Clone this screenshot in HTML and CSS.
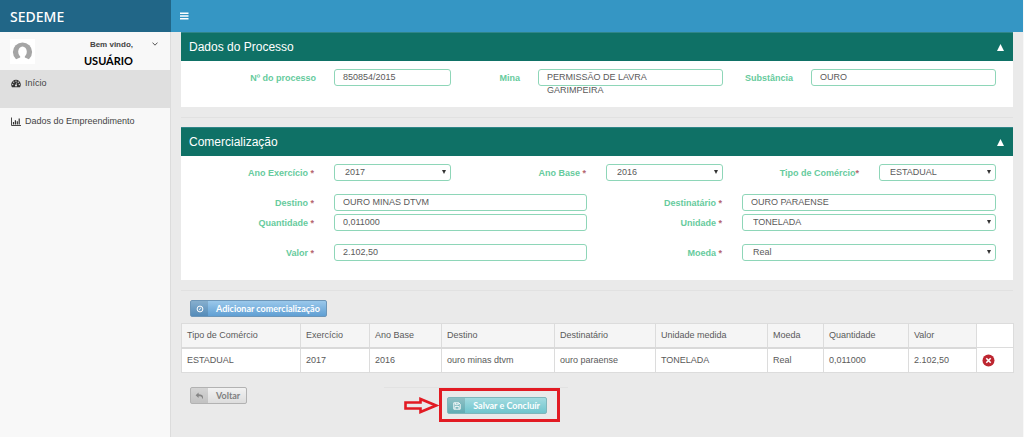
FILE: index.html
```html
<!DOCTYPE html>
<html lang="pt-BR">
<head>
<meta charset="utf-8">
<meta name="viewport" content="width=device-width, initial-scale=1">
<title>SEDEME</title>
<link rel="stylesheet" href="styles.css">
</head>
<body>
<div class="app">
  <aside class="sidebar">
    <div class="brand">SEDEME</div>
    <div class="user">
      <svg class="avatar" viewBox="0 0 25 25" aria-hidden="true">
        <rect width="25" height="25" fill="#fff"/>
        <circle cx="12.500" cy="13" r="9.600" fill="#a5a5a5"/>
        <path d="M5 23c.3-2.600 2.600-3.400 5.200-4.400v-3h4.600v3c2.600 1 4.900 1.800 5.200 4.400z" fill="#fff"/>
        <ellipse cx="12.500" cy="12.700" rx="4.300" ry="5.300" fill="#fff"/>
      </svg>
      <div class="user-text">
        <span class="welcome">Bem vindo,</span>
        <strong class="user-name">USUÁRIO</strong>
      </div>
      <button class="user-toggle" type="button" aria-label="Opções do usuário">
        <svg viewBox="0 0 6 4" width="6" height="4"><path d="M.5.6 3 3.200 5.500.6" fill="none" stroke="#555" stroke-width="1"/></svg>
      </button>
    </div>
    <nav class="menu">
      <a class="menu-item active" href="#">
        <svg viewBox="0 0 10 9" width="10" height="9"><path d="M5 .8A4.800 4.800 0 0 0 .2 5.600c0 1 .3 1.900.8 2.600h8c.5-.7.8-1.600.8-2.600A4.800 4.800 0 0 0 5 .8z" fill="#333"/><g fill="#dfdfdf"><circle cx="1.700" cy="5.500" r=".65"/><circle cx="2.700" cy="3.200" r=".65"/><circle cx="5" cy="2.200" r=".65"/><circle cx="7.300" cy="3.200" r=".65"/><circle cx="8.300" cy="5.500" r=".65"/><circle cx="5" cy="6.600" r="1"/></g><path d="m5 6.600.6-3" stroke="#dfdfdf" stroke-width=".6"/></svg>
        Início
      </a>
      <a class="menu-item" href="#">
        <svg viewBox="0 0 10 9" width="10" height="9"><path d="M.5.500v8H10" fill="none" stroke="#333" stroke-width=".9"/><path d="M2.500 5v2.600M4.400 3.200v4.400M6.300 4.200v3.400M8.200 1.500v6.100" stroke="#333" stroke-width="1.200"/></svg>
        Dados do Empreendimento
      </a>
    </nav>
  </aside>

  <div class="page">
    <header class="topbar">
      <button class="hamburger" type="button" aria-label="Menu"><svg viewBox="0 0 9 8" width="9" height="8"><path d="M0 1.200h8.500M0 4h8.500M0 6.800h8.500" stroke="#fff" stroke-width="1.500"/></svg></button>
    </header>
    <main class="content">
      <section class="panel">
        <h2 class="panel-title">Dados do Processo
          <button class="collapse" type="button" aria-label="Recolher"><svg viewBox="0 0 7 7" width="7" height="7"><path d="M3.500 0 7 7H0z" fill="#fff"/></svg></button>
        </h2>
        <div class="panel-body">
          <div class="row process">
            <label for="proc">Nº do processo</label><output class="field" id="proc">850854/2015</output>
            <label for="mina">Mina</label><output class="field" id="mina">PERMISSÃO DE LAVRA<br>GARIMPEIRA</output>
            <label for="subst">Substância</label><output class="field" id="subst">OURO</output>
          </div>
        </div>
      </section>
      <hr>
      <section class="panel">
        <h2 class="panel-title">Comercialização
          <button class="collapse" type="button" aria-label="Recolher"><svg viewBox="0 0 7 7" width="7" height="7"><path d="M3.500 0 7 7H0z" fill="#fff"/></svg></button>
        </h2>
        <form class="panel-body trade" id="trade">
          <div class="row triple spaced">
            <label for="exercicio">Ano Exercício <i>*</i></label>
            <div class="select"><select class="field" id="exercicio"><option>2017</option></select></div>
            <label for="base">Ano Base <i>*</i></label>
            <div class="select"><select class="field" id="base"><option>2016</option></select></div>
            <label for="tipo">Tipo de Comércio<i>*</i></label>
            <div class="select"><select class="field" id="tipo"><option>ESTADUAL</option></select></div>
          </div>
          <div class="row double">
            <label for="destino">Destino <i>*</i></label>
            <input class="field" id="destino" type="text" value="OURO MINAS DTVM">
            <label for="destinatario">Destinatário <i>*</i></label>
            <input class="field" id="destinatario" type="text" value="OURO PARAENSE">
          </div>
          <div class="row double spaced">
            <label for="quantidade">Quantidade <i>*</i></label>
            <input class="field" id="quantidade" type="text" value="0,011000">
            <label for="unidade">Unidade <i>*</i></label>
            <div class="select"><select class="field" id="unidade"><option>TONELADA</option></select></div>
          </div>
          <div class="row double">
            <label for="valor">Valor <i>*</i></label>
            <input class="field" id="valor" type="text" value="2.102,50">
            <label for="moeda">Moeda <i>*</i></label>
            <div class="select"><select class="field" id="moeda"><option>Real</option></select></div>
          </div>
        </form>
      </section>
      <hr>
      <div class="toolbar">
        <button class="btn blue" type="button">
          <span class="btn-icon"><svg viewBox="0 0 8 8" width="8" height="8"><circle cx="4" cy="4" r="2.900" fill="none" stroke="#fff" stroke-width="1"/><path d="M4.900 2.600 3.200 5.200" stroke="#fff" stroke-width=".9"/></svg></span>
          <span class="btn-label">Adicionar comercialização</span>
        </button>
      </div>
      <table class="items">
        <colgroup><col class="c-tipo"><col class="c-exercicio"><col class="c-base"><col class="c-destino"><col class="c-destinatario"><col class="c-unidade"><col class="c-moeda"><col class="c-quantidade"><col class="c-valor"><col class="c-acao"></colgroup>
        <thead>
          <tr><th>Tipo de Comércio</th><th>Exercício</th><th>Ano Base</th><th>Destino</th><th>Destinatário</th><th>Unidade medida</th><th>Moeda</th><th>Quantidade</th><th>Valor</th><td></td></tr>
        </thead>
        <tbody>
          <tr><td>ESTADUAL</td><td>2017</td><td>2016</td><td>ouro minas dtvm</td><td>ouro paraense</td><td>TONELADA</td><td>Real</td><td>0,011000</td><td>2.102,50</td>
            <td><button class="remove" type="button" aria-label="Remover"><svg viewBox="0 0 13 13" width="13" height="13"><circle cx="6.500" cy="6.500" r="6" fill="#bd2630"/><path d="m4.300 4.300 4.400 4.400M8.700 4.300 4.300 8.700" stroke="#fff" stroke-width="1.600"/></svg></button></td></tr>
        </tbody>
      </table>
      <div class="actions">
        <button class="btn gray" type="button">
          <span class="btn-icon"><svg viewBox="0 0 9 8" width="9" height="8"><path d="M3.600.6.600 3.300l3 2.700V4.300c2.400 0 3.700.4 3.900 2.900 1.600-3.200-.4-4.900-3.900-4.900z" fill="#858585"/></svg></span>
          <span class="btn-label">Voltar</span>
        </button>
        <div class="save-area">
          <svg class="arrow" viewBox="0 0 35 17" width="35" height="17" aria-hidden="true"><path d="M1.500 5.500h15V2L32 8.500 16.500 15v-3.500h-15z" fill="none" stroke="#e21b23" stroke-width="2.600"/></svg>
          <div class="highlight">
            <button class="btn teal" type="submit" form="trade">
              <span class="btn-icon"><svg viewBox="0 0 8 8" width="8" height="8"><path d="M.8.800h5l1.400 1.400v5H.8zM2.300.800v2h2.900v-2M2 7.200V4.600h4v2.600" fill="none" stroke="#fff" stroke-width=".9"/></svg></span>
              <span class="btn-label">Salvar e Concluír</span>
            </button>
          </div>
        </div>
      </div>
    </main>
  </div>
</div>
</body>
</html>
```
FILE: styles.css
```css
* { box-sizing: border-box; }
body {
  margin: 0;
  background: #eaeaea;
  color: #5a5a5a;
  font: 9px/13px "Liberation Sans", Arial, sans-serif;
}
button { border: 0; padding: 0; background: none; font: inherit; color: inherit; cursor: pointer; }
svg { display: block; flex: none; }

.app { display: flex; min-height: 100vh; }
.sidebar { flex: 0 0 171px; background: #f8f8f8; border-right: 1px solid #dcdcdc; }
.page { flex: 1; min-width: 0; border-right: 1px solid #f8f8f8; }

.brand {
  height: 32px;
  margin-right: -1px;
  padding-left: 10px;
  background: #216687;
  color: #fff;
  font: 500 14px/33px "Noto Sans", "Open Sans", sans-serif;
}
.user { display: flex; align-items: flex-start; height: 38px; padding: 7px 12px 0 10px; }
.avatar { width: 25px; height: 25px; }
.user-text { flex: 1; display: flex; flex-direction: column; align-items: flex-end; padding-right: 19px; font-weight: bold; }
.welcome { font-size: 8px; line-height: 12px; color: #444; }
.user-name { color: #000; font: bold 11px/19px Lato, sans-serif; }
.user-toggle { padding-top: 3px; }

.menu-item { display: flex; gap: 4px; height: 38px; padding: 7px 0 0 11px; color: #444; text-decoration: none; }
.menu-item svg { margin-top: 2px; }
.menu-item.active { background: #dfdfdf; }

.topbar { display: flex; align-items: center; height: 32px; padding-left: 9px; background: #3596c4; }

.content { padding: 0 10px 15px; }
.panel { background: #fff; }
.panel-title {
  display: flex;
  justify-content: space-between;
  align-items: center;
  height: 29px;
  margin: 0;
  padding: 0 9px 0 8px;
  border-top: 1px solid #2f8588;
  background: #0f7166;
  color: #fff;
  font-size: 12px;
  font-weight: normal;
}
.panel-body { padding: 8px 17px 21px 0; }
.panel-body.trade { padding-bottom: 19px; }
.trade label { padding-right: 2px; }
hr { height: 1px; margin: 10px 0 9px; border: 0; background: #e1e1e1; }

.row { display: grid; column-gap: 18px; margin-bottom: 3px; }
.row:last-child { margin-bottom: 0; }
.row.spaced { margin-bottom: 13px; }
.process { grid-template-columns: 135fr 117fr 51fr 185fr 52fr 185fr; }
.triple { grid-template-columns: 135fr 117fr 119fr 117fr 120fr 117fr; }
.double { grid-template-columns: 135fr 253fr 119fr 254fr; }
label { padding-top: 3px; text-align: right; white-space: nowrap; font-weight: bold; color: #66cb9d; }
label i { font-style: normal; color: #b5656f; }

.field {
  display: block;
  width: 100%;
  min-width: 0;
  height: 17px;
  margin: 0;
  padding: 1px 8px;
  border: 1px solid #8ed6b8;
  border-radius: 3px;
  background: #fff;
  color: #5a5a5a;
  font: inherit;
}
input.field { padding: 0 8px 1px; }
.select { position: relative; }
.select select { padding-left: 10px; appearance: none; }
.select::after {
  content: "";
  position: absolute;
  right: 5px;
  top: 6px;
  border: 2px solid transparent;
  border-top: 4px solid #333;
  border-bottom: 0;
  pointer-events: none;
}

.toolbar { padding: 0 9px 6px; }
.btn {
  display: flex;
  height: 17px;
  border: 1px solid;
  border-radius: 2px;
  overflow: hidden;
  font: bold 9px/15px Lato, sans-serif;
  color: #fff;
}
.btn-icon { display: grid; place-items: center; width: 17px; height: 15px; background: rgba(0, 0, 0, .12); }
.btn-label { padding: 0 6px 0 8px; white-space: nowrap; }
.btn.blue { border-color: #6d96b8; background: linear-gradient(#9ac8eb, #609fd3); }
.btn.teal { border-color: #80b6bb; background: linear-gradient(#a3dbe0, #70c5cd); }
.btn.gray { border-color: #b2b2b2; background: linear-gradient(#f2f2f2, #dddddd); color: #808080; }

.items { width: 100%; table-layout: fixed; border-collapse: collapse; background: #fff; }
.items th, .items td { height: 25px; padding: 0 5px; border: 1px solid #dcdcdc; text-align: left; font-weight: normal; }
.items thead th, .items thead td { height: 24px; }
.items th { background: #f5f5f5; border-bottom: 2px solid #d9d9d9; }
.c-tipo { width: 119px; }
.c-exercicio { width: 69px; }
.c-base { width: 72px; }
.c-destino { width: 113px; }
.c-destinatario { width: 101px; }
.c-unidade { width: 112px; }
.c-moeda { width: 56px; }
.c-quantidade { width: 85px; }
.c-valor { width: 68px; }
.c-acao { width: 37px; }
.remove { display: block; }

.actions { display: flex; align-items: flex-start; gap: 137px; padding: 14px 9px 0; }
.save-area { display: flex; align-items: center; border-top: 1px solid #e2e2e2; padding: 0 8px 0 20px; }
.highlight { padding: 6px 10px 5px 5px; border: 3px solid #e21b23; }
```
